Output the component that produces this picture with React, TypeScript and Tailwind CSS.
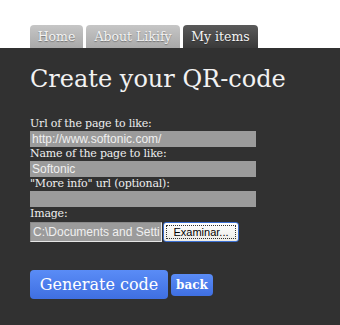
import React from 'react';

function Tab({ label, width, active }: { label: string; width: string; active?: boolean }) {
  return (
    <div
      className={
        "flex h-[23px] items-center justify-center whitespace-nowrap rounded-t-[4px] pt-[2px] font-['DejaVu_Serif',serif] text-[12.5px] text-[#f4f4f4] [text-shadow:0_1px_1px_rgba(0,0,0,0.35)] " +
        width +
        ' ' +
        (active
          ? 'bg-gradient-to-b from-[#5a5a5a] to-[#3a3a3a]'
          : 'bg-gradient-to-b from-[#c6c6c6] to-[#a9a9a9]')
      }
    >
      {label}
    </div>
  );
}

function Label({ children }: { children: React.ReactNode }) {
  return (
    <div className="h-[14px] whitespace-nowrap font-['DejaVu_Serif',serif] text-[11px] leading-[14px] tracking-[-0.2px] text-[#eeeeee]">
      {children}
    </div>
  );
}

function Field({ label, value }: { label: string; value: string }) {
  return (
    <>
      <Label>{label}</Label>
      <div className="flex h-[16px] w-[226px] items-center bg-[#9b9b9b] px-[2px] font-['Liberation_Sans',Arial,sans-serif] text-[12px] text-[#f0f0f0]">
        {value}
      </div>
    </>
  );
}

export default function App() {
  return (
    <div className="flex h-[325px] w-[340px] flex-col bg-white">
      <div className="flex gap-[3px] pl-[30px] pt-[25px]">
        <Tab label="Home" width="w-[53px]" />
        <Tab label="About Likify" width="w-[94px]" />
        <Tab label="My items" width="w-[75px]" active />
      </div>
      <div className="flex-1 bg-[#313131] pl-[30px]">
        <h1 className="mt-[13px] h-[36px] font-['DejaVu_Serif',serif] text-[24px] leading-[36px] text-[#f2f2f2]">
          Create your QR-code
        </h1>
        <div className="mt-[20px] flex flex-col">
          <Field label="Url of the page to like:" value="http://www.softonic.com/" />
          <Field label="Name of the page to like:" value="Softonic" />
          <Field label={'"More info" url (optional):'} value="" />
          <Label>Image:</Label>
          <div className="mt-[1px] flex items-center gap-[1px]">
            <div className="flex h-[20px] w-[132px] items-center overflow-hidden whitespace-nowrap border border-[#e6e6e6] border-l-[#8a8a8a] border-t-[#8a8a8a] bg-[#9b9b9b] px-[2px] font-['Liberation_Sans',Arial,sans-serif] text-[12px] text-[#f0f0f0]">
              C:\Documents and Setti
            </div>
            <div className="flex h-[20px] w-[76px] items-center justify-center rounded-[3px] border border-[#3b6fd1] bg-gradient-to-b from-white to-[#ecebe6] p-[2px]">
              <div className="flex h-full w-full items-center justify-center whitespace-nowrap border border-dotted border-[#333] font-['Liberation_Sans',Arial,sans-serif] text-[11px] text-black">
                Examinar...
              </div>
            </div>
          </div>
        </div>
        <div className="mt-[28px] flex items-center gap-[3px]">
          <button className="flex h-[29px] w-[138px] items-center justify-center rounded-[4px] bg-gradient-to-b from-[#5a8cf6] to-[#3f6fe2] font-['DejaVu_Serif',serif] text-[16px] text-white">
            Generate code
          </button>
          <button className="flex h-[22px] w-[42px] items-center justify-center rounded-[4px] bg-gradient-to-b from-[#5a8cf6] to-[#3f6fe2] font-['DejaVu_Serif',serif] text-[12px] font-bold text-white">
            back
          </button>
        </div>
      </div>
    </div>
  );
}
